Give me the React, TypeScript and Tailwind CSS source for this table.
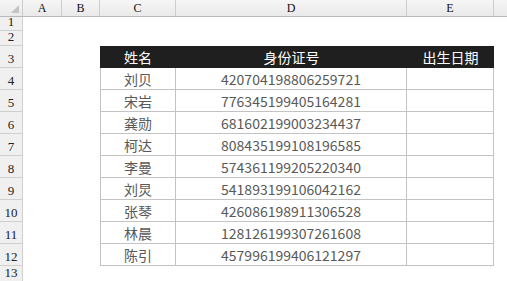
import React from 'react';

const people = [
  ['刘贝', '420704198806259721'],
  ['宋岩', '776345199405164281'],
  ['龚勋', '681602199003234437'],
  ['柯达', '808435199108196585'],
  ['李曼', '574361199205220340'],
  ['刘炅', '541893199106042162'],
  ['张琴', '426086198911306528'],
  ['林晨', '128126199307261608'],
  ['陈引', '457996199406121297'],
];

const cjk = { fontFamily: '"Noto Sans CJK SC", "Noto Sans", sans-serif' };
const headFont = { fontFamily: '"Liberation Serif", "DejaVu Serif", serif' };

const RowNum = ({ n, h }: { n: number; h: string }) => (
  <div
    className={`w-[23px] ${h} shrink-0 flex items-end justify-center pb-[2px] bg-[#f0f0f0] border-r border-b border-[#cfcfcf] text-[13px] leading-none text-[#222]`}
    style={headFont}
  >
    {n}
  </div>
);

const ColHead = ({ label, w }: { label: string; w: string }) => (
  <div
    className={`${w} shrink-0 h-full flex items-center justify-center border-r border-[#cdcdcd] text-[12px] text-[#111]`}
    style={headFont}
  >
    {label}
  </div>
);

export default function App() {
  return (
    <div className="w-[507px] h-[281px] overflow-hidden bg-white">
      {/* column letters */}
      <div className="flex h-[17px] bg-gradient-to-b from-[#f6f6f6] to-[#e9e9e9] border-b border-[#b8b8b8]">
        <div className="w-[23px] shrink-0 h-full relative border-r border-[#cdcdcd]">
          <svg className="absolute right-[3px] bottom-[3px]" width="8" height="8" viewBox="0 0 8 8">
            <polygon points="8,0 8,8 0,8" fill="#c4c4c4" />
          </svg>
        </div>
        <ColHead label="A" w="w-[39px]" />
        <ColHead label="B" w="w-[38px]" />
        <ColHead label="C" w="w-[76px]" />
        <ColHead label="D" w="w-[231px]" />
        <ColHead label="E" w="w-[87px]" />
        <div className="flex-1" />
      </div>

      {/* rows 1-2 */}
      <div className="flex">
        <RowNum n={1} h="h-[14px]" />
      </div>
      <div className="flex">
        <RowNum n={2} h="h-[15px]" />
      </div>

      {/* header row */}
      <div className="flex">
        <RowNum n={3} h="h-[22px]" />
        <div className="w-[77px] shrink-0" />
        <div
          className="w-[394px] shrink-0 h-[22px] flex bg-[#1f1f1f] text-white text-[14px] leading-none"
          style={cjk}
        >
          <div className="w-[76px] flex items-center justify-center">姓名</div>
          <div className="w-[231px] flex items-center justify-center">身份证号</div>
          <div className="w-[87px] flex items-center justify-center">出生日期</div>
        </div>
      </div>

      {people.map(([name, id], i) => (
        <div className="flex" key={id}>
          <RowNum n={i + 4} h="h-[22px]" />
          <div className="w-[77px] shrink-0" />
          <div className="flex text-[14px] leading-none text-[#595959]" style={cjk}>
            <div className="w-[76px] h-[22px] flex items-center justify-center border-l border-r border-b border-[#c3c3c3]">
              {name}
            </div>
            <div className="w-[231px] h-[22px] flex items-center justify-center border-r border-b border-[#c3c3c3]">
              {id}
            </div>
            <div className="w-[87px] h-[22px] border-r border-b border-[#c3c3c3]" />
          </div>
        </div>
      ))}

      <div className="flex">
        <RowNum n={13} h="h-[16px]" />
      </div>
    </div>
  );
}
